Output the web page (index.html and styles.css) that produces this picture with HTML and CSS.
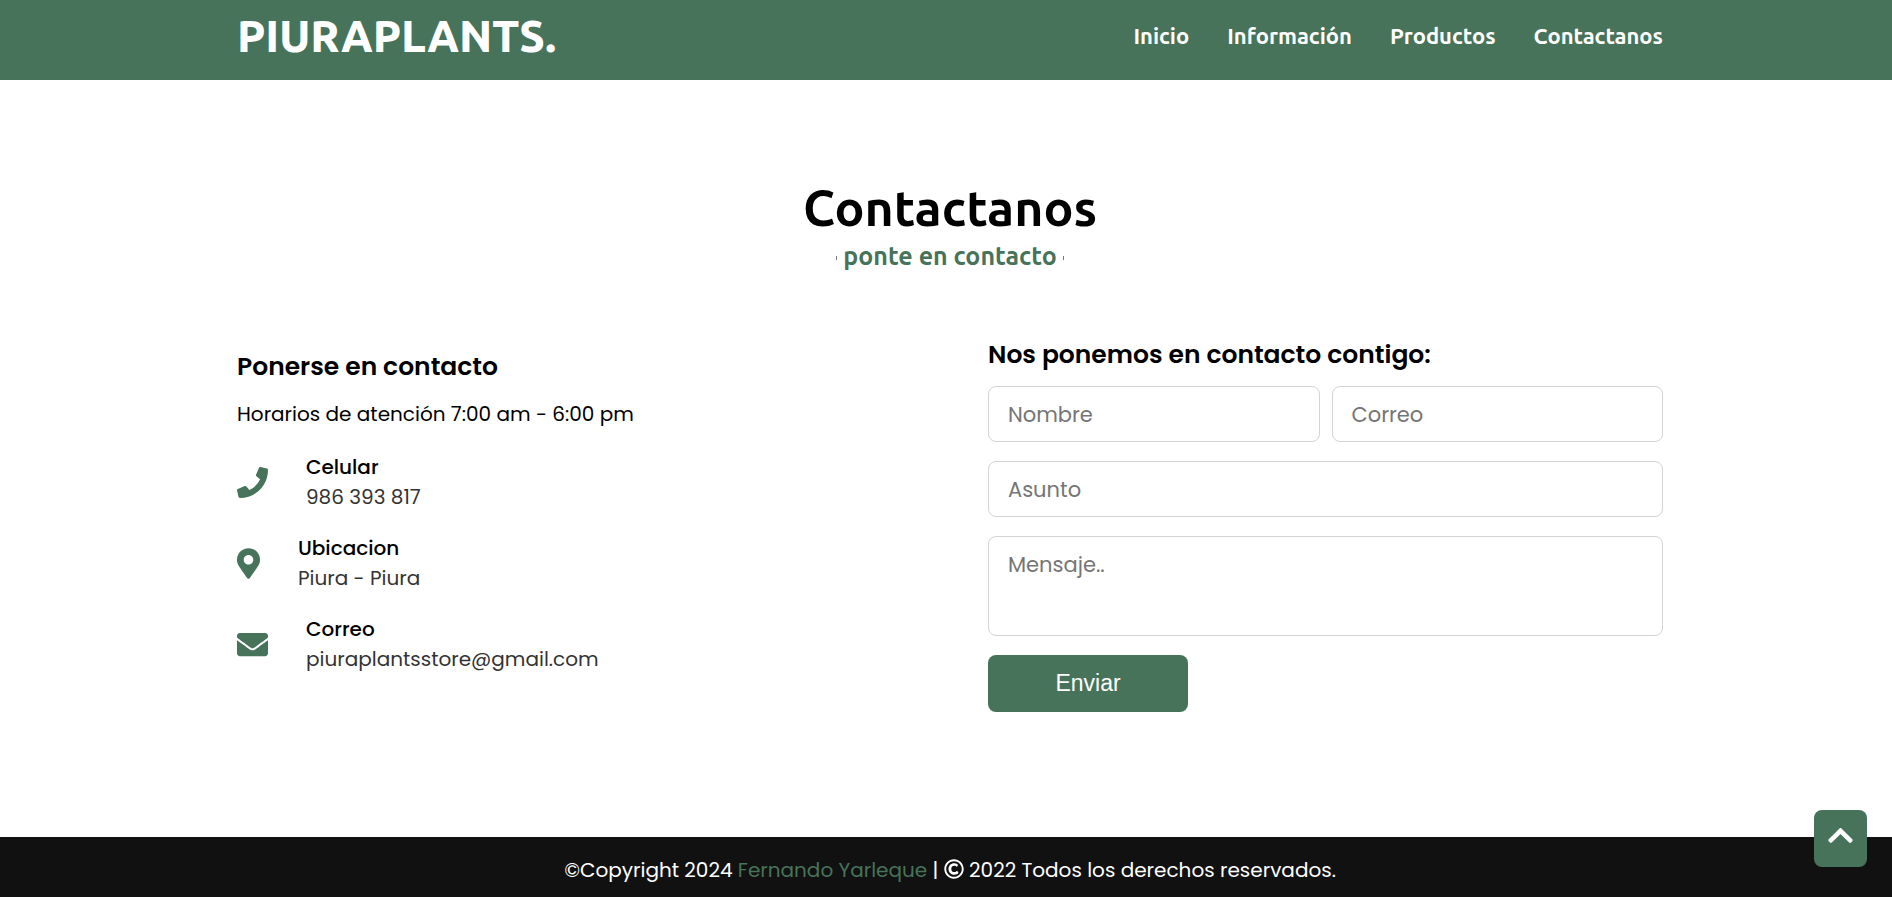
FILE: index.html
```html
<!DOCTYPE html>
<html lang="es">
<head>
<meta charset="utf-8">
<meta name="viewport" content="width=device-width, initial-scale=1">
<title>PiuraPlants - Contactanos</title>
<link rel="stylesheet" href="styles.css">
</head>
<body>
<header class="navbar">
  <div class="container navbar-content">
    <a class="logo" href="#">PIURAPLANTS.</a>
    <nav class="menu">
      <a href="#inicio">Inicio</a>
      <a href="#informacion">Información</a>
      <a href="#productos">Productos</a>
      <a href="#contacto">Contactanos</a>
    </nav>
  </div>
</header>
<main class="contact" id="contacto">
  <div class="container">
    <h1 class="title">Contactanos</h1>
    <p class="subtitle">ponte en contacto</p>
    <div class="columns">
      <section class="info">
        <h2 class="heading">Ponerse en contacto</h2>
        <p class="hours">Horarios de atención 7:00 am - 6:00 pm</p>
        <ul class="details">
          <li class="row">
            <svg class="icon" viewBox="0 0 512 512" aria-hidden="true"><path d="M493.400 24.600l-104-24c-11.300-2.600-22.900 3.300-27.500 13.900l-48 112c-4.200 9.800-1.400 21.300 6.900 28l60.600 49.600c-36 76.700-98.900 140.500-177.200 177.200l-49.600-60.600c-6.800-8.300-18.200-11.100-28-6.900l-112 48C3.900 366.500-2 378.100.6 389.400l24 104C27.100 504.200 36.700 512 48 512c256.100 0 464-207.500 464-464 0-11.200-7.700-20.900-18.600-23.400z"/></svg>
            <div><div class="label">Celular</div><div class="value">986 393 817</div></div>
          </li>
          <li class="row">
            <svg class="icon icon-narrow" viewBox="0 0 384 512" aria-hidden="true"><path d="M172.300 501.700C27 291 0 269.400 0 192 0 86 86 0 192 0s192 86 192 192c0 77.400-27 99-172.300 309.700-9.500 13.800-29.900 13.800-39.400 0zM192 272c44.200 0 80-35.800 80-80s-35.800-80-80-80-80 35.800-80 80 35.800 80 80 80z"/></svg>
            <div><div class="label">Ubicacion</div><div class="value">Piura - Piura</div></div>
          </li>
          <li class="row">
            <svg class="icon" viewBox="0 0 512 512" aria-hidden="true"><path d="M502.300 190.800c3.900-3.100 9.700-.2 9.700 4.700V400c0 26.500-21.500 48-48 48H48c-26.500 0-48-21.500-48-48V195.600c0-5 5.700-7.800 9.700-4.700 22.400 17.400 52.100 39.500 154.100 113.600 21.100 15.400 56.700 47.800 92.200 47.600 35.700.3 72-32.800 92.300-47.600 102-74.100 131.600-96.300 154-113.700zM256 320c23.200.4 56.600-29.200 73.400-41.400 132.700-96.300 142.800-104.700 173.400-128.700 5.800-4.500 9.200-11.500 9.200-18.900v-19c0-26.500-21.500-48-48-48H48c-26.500 0-48 21.500-48 48v19c0 7.400 3.400 14.300 9.200 18.900 30.600 23.900 40.700 32.400 173.400 128.700 16.800 12.200 50.200 41.800 73.400 41.400z"/></svg>
            <div><div class="label">Correo</div><div class="value">piuraplantsstore@gmail.com</div></div>
          </li>
        </ul>
      </section>
      <section class="message">
        <h2 class="heading">Nos ponemos en contacto contigo:</h2>
        <form class="form">
          <div class="pair">
            <input class="field" type="text" placeholder="Nombre" aria-label="Nombre">
            <input class="field" type="email" placeholder="Correo" aria-label="Correo">
          </div>
          <input class="field" type="text" placeholder="Asunto" aria-label="Asunto">
          <textarea class="field area" placeholder="Mensaje.." aria-label="Mensaje"></textarea>
          <button class="send" type="button">Enviar</button>
        </form>
      </section>
    </div>
  </div>
</main>
<footer class="footer">
  <p class="container footer-text">©Copyright 2024 <a class="author" href="#">Fernando Yarleque</a> | <svg class="copy" viewBox="0 0 512 512" aria-hidden="true"><path d="M256 8C119 8 8 119 8 256s111 248 248 248 248-111 248-248S393 8 256 8zm0 448c-110.500 0-200-89.500-200-200S145.500 56 256 56s200 89.500 200 200-89.500 200-200 200zm107.200-94.400c-8.400 9-42 40.200-103 40.200-86.200 0-144.800-64.400-144.800-147.200 0-82 62-144.200 144-144.200 57.400 0 86.700 27.200 95.500 36.200 4 4.200 4.600 10.700 1.200 15.500l-19.600 30.200c-4.200 6.400-13 7.800-18.900 2.900-9.900-8.100-29.700-20.900-55.200-20.900-45 0-75.800 33-75.800 78.500 0 42.500 27.400 82.500 76.200 82.500 30.900 0 54-18 62.600-26.200 5.400-5.200 14.100-4.300 18.400 1.800l21.500 28.400c3.700 5 3.300 11.900-.8 16.300z"/></svg> 2022 Todos los derechos reservados.</p>
</footer>
<a class="to-top" href="#" aria-label="Volver arriba">
  <svg viewBox="0 0 448 512" aria-hidden="true"><path d="M240.971 130.524l194.343 194.343c9.373 9.373 9.373 24.569 0 33.941l-22.667 22.667c-9.357 9.357-24.522 9.375-33.901.04L224 227.495 69.255 381.516c-9.379 9.335-24.544 9.317-33.901-.04l-22.667-22.667c-9.373-9.373-9.373-24.569 0-33.941L207.030 130.525c9.372-9.373 24.568-9.373 33.941-.001z"/></svg>
</a>
</body>
</html>
```

FILE: styles.css
```css
:root {
  --green: #47735a;
  --display: Ubuntu, "Noto Sans", "Open Sans", sans-serif;
  --text: Poppins, Inter, sans-serif;
}

* {
  box-sizing: border-box;
  margin: 0;
  padding: 0;
}

body {
  display: flex;
  flex-direction: column;
  min-height: 100vh;
  font-family: var(--text);
  color: #000;
  background: #fff;
}

a {
  color: inherit;
  text-decoration: none;
}

.container {
  width: 100%;
  max-width: 1434px;
  margin: 0 auto;
  padding-left: 8px;
}

.navbar {
  padding: 6px 0 14px;
  color: #fff;
  background: var(--green);
  font-family: var(--display);
}

.navbar-content {
  display: flex;
  align-items: center;
  justify-content: space-between;
}

.logo {
  font-size: 44px;
  font-weight: 800;
  line-height: 60px;
}

.menu {
  display: flex;
  gap: 38px;
  font-size: 22px;
  font-weight: 600;
  line-height: 24px;
}

.contact {
  flex: 1;
  padding: 95px 0 100px;
}

.title {
  font-family: var(--display);
  font-size: 50px;
  font-weight: 600;
  line-height: 64px;
  text-align: center;
}

.subtitle {
  display: flex;
  align-items: center;
  justify-content: center;
  gap: 6px;
  font-family: var(--display);
  font-size: 25px;
  font-weight: 600;
  line-height: 34px;
  color: var(--green);
}

.subtitle::before,
.subtitle::after {
  content: "";
  width: 1px;
  height: 4px;
  margin-top: 4px;
  background: #777;
}

.columns {
  display: grid;
  grid-template-columns: 1fr 1fr;
  gap: 76px;
  align-items: start;
  margin-top: 63px;
}

.info {
  padding-top: 12px;
}

.heading {
  font-size: 25px;
  font-weight: 600;
  line-height: 38px;
}

.hours {
  margin-top: 12px;
  font-size: 20px;
  line-height: 32px;
}

.details {
  display: grid;
  gap: 21px;
  margin-top: 22px;
  list-style: none;
}

.row {
  display: flex;
  align-items: center;
  gap: 38px;
}

.icon {
  width: 31px;
  height: 31px;
  fill: var(--green);
}

.icon-narrow {
  width: 23px;
}

.label,
.value {
  font-size: 20px;
  line-height: 30px;
}

.label {
  font-weight: 500;
}

.value {
  font-weight: 400;
  color: #333;
}

.form {
  display: flex;
  flex-direction: column;
  align-items: flex-start;
  gap: 19px;
  margin-top: 12px;
}

.pair {
  display: grid;
  grid-template-columns: 1fr 1fr;
  gap: 12px;
  width: 100%;
}

.field {
  width: 100%;
  height: 56px;
  padding: 0 19px;
  font-family: var(--text);
  font-size: 21px;
  line-height: 30px;
  background: #fff;
  border: 1px solid lightgrey;
  border-radius: 8px;
}

.field::placeholder {
  color: #757575;
}

.area {
  display: block;
  height: 100px;
  padding-top: 13px;
  resize: none;
}

.send {
  width: 200px;
  height: 57px;
  font-family: "Liberation Sans", Arial, sans-serif;
  font-size: 23px;
  color: #fff;
  background: var(--green);
  border: 0;
  border-radius: 8px;
}

.footer {
  padding: 18px 0 12px;
  color: #fff;
  background: #111;
}

.footer-text {
  font-size: 20px;
  line-height: 30px;
  text-align: center;
}

.author {
  color: var(--green);
}

.copy {
  width: 20px;
  height: 20px;
  vertical-align: -2px;
  fill: #fff;
}

.to-top {
  position: fixed;
  right: 25px;
  bottom: 30px;
  display: flex;
  align-items: center;
  justify-content: center;
  width: 53px;
  height: 57px;
  padding-bottom: 6px;
  background: var(--green);
  border-radius: 8px;
}

.to-top svg {
  width: 25px;
  height: 29px;
  fill: #fff;
}
```
